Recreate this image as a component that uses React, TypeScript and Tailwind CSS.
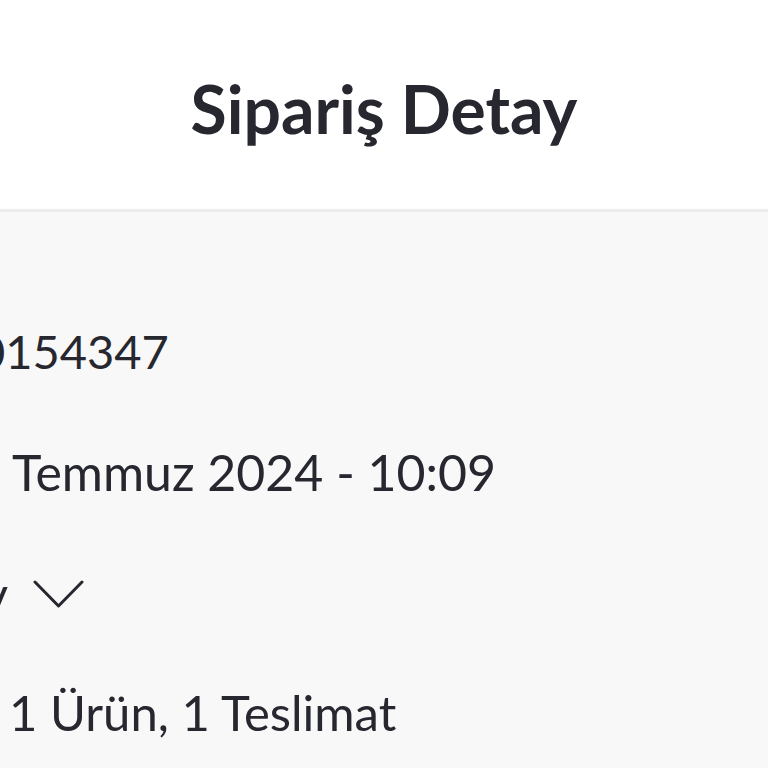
import React from "react";

// satır: soldaki kısım ekran dışına taşıyor, sadece sağ taraftaki metin okunuyor
function Row({ hidden, children, className }: { hidden: string; children: React.ReactNode; className?: string }) {
  return (
    <div className={`flex items-center whitespace-nowrap ${className ?? ""}`}>
      <span className="w-0 flex justify-end">{hidden}</span>
      {children}
    </div>
  );
}

export default function App() {
  return (
    <div
      className="w-[768px] h-[768px] overflow-hidden flex flex-col bg-[#f8f8f9] text-[#26272f]"
      style={{ fontFamily: "Lato, 'Noto Sans', sans-serif" }}
    >
      <header className="h-[212px] shrink-0 bg-white border-b-[3px] border-[#ececee] flex items-center justify-center">
        <h1 className="text-[66px] font-bold pt-[8px]">Sipariş Detay</h1>
      </header>

      <main className="flex-1 flex flex-col leading-none">
        <Row hidden="Sipariş No: 24071" className="mt-[116px] -ml-[22px] text-[47px]">
          <span>0154347</span>
        </Row>
        <Row hidden="Tarih: 10" className="mt-[72px] text-[50px]">
          <span className="ml-[12px]">Temmuz 2024 - 10:09</span>
        </Row>
        <Row hidden="Ödeme Detay" className="mt-[72px] pl-[8px] text-[50px]">
          <svg className="ml-[25px]" width="51" height="29" viewBox="0 0 51 29" fill="none">
            <polyline points="2,2 25.5,26 49,2" stroke="currentColor" strokeWidth="3" strokeLinecap="round" strokeLinejoin="round" />
          </svg>
        </Row>
        <Row hidden="Özet:" className="mt-[69px] text-[49px]">
          <span className="ml-[9px]">1 Ürün, 1 Teslimat</span>
        </Row>
      </main>
    </div>
  );
}
